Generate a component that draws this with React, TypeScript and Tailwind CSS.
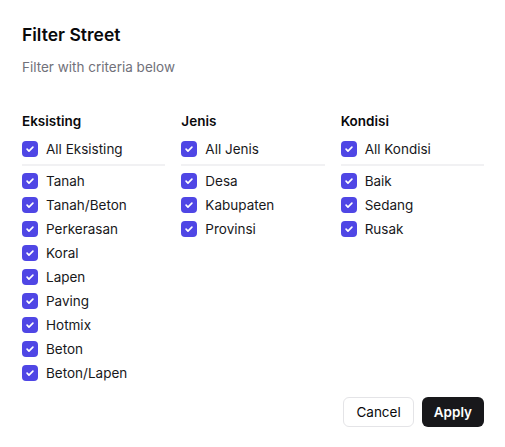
import React from "react";

const Check = () => (
  <span className="flex h-4 w-4 shrink-0 items-center justify-center rounded-[4px] bg-[#4f46e5]">
    <svg width="10" height="10" viewBox="0 0 24 24" fill="none" stroke="white" strokeWidth="4" strokeLinecap="round" strokeLinejoin="round">
      <path d="M5 12.5l4.5 4.5L19 7.5" />
    </svg>
  </span>
);

const Row = ({ label }: { label: string }) => (
  <div className="flex h-6 items-center gap-2">
    <Check />
    <span className="text-[13.5px] leading-5 text-[#18181b]">{label}</span>
  </div>
);

const cols = [
  { title: "Eksisting", all: "All Eksisting", items: ["Tanah", "Tanah/Beton", "Perkerasan", "Koral", "Lapen", "Paving", "Hotmix", "Beton", "Beton/Lapen"] },
  { title: "Jenis", all: "All Jenis", items: ["Desa", "Kabupaten", "Provinsi"] },
  { title: "Kondisi", all: "All Kondisi", items: ["Baik", "Sedang", "Rusak"] },
];

export default function App() {
  return (
    <div className="h-[447px] w-[505px] bg-white pl-[22px] pr-[21px] pt-[21px]" style={{ fontFamily: "Inter, 'Noto Sans', sans-serif" }}>
      <h1 className="text-[17.5px] font-semibold leading-7 text-[#09090b]">Filter Street</h1>
      <p className="mt-2 text-[13.5px] leading-5 text-[#71717a]">Filter with criteria below</p>
      <div className="mt-[34px] grid grid-cols-3 gap-x-4">
        {cols.map((c) => (
          <div key={c.title} className="flex flex-col">
            <div className="text-[13.5px] font-semibold leading-5 text-[#09090b]">{c.title}</div>
            <div className="mt-[6px]">
              <Row label={c.all} />
            </div>
            <div className="mb-[3px] mt-[3px] h-[2px] bg-[#f1f1f3]" />
            {c.items.map((i) => (
              <Row key={i} label={i} />
            ))}
          </div>
        ))}
      </div>
      <div className="mt-3 flex justify-end gap-2">
        <button className="h-[30px] rounded-md border border-[#e4e4e7] bg-white px-3 text-[13.5px] font-normal text-[#09090b]">Cancel</button>
        <button className="h-[30px] rounded-md bg-[#18181b] px-3 text-[13.5px] font-semibold text-white">Apply</button>
      </div>
    </div>
  );
}
